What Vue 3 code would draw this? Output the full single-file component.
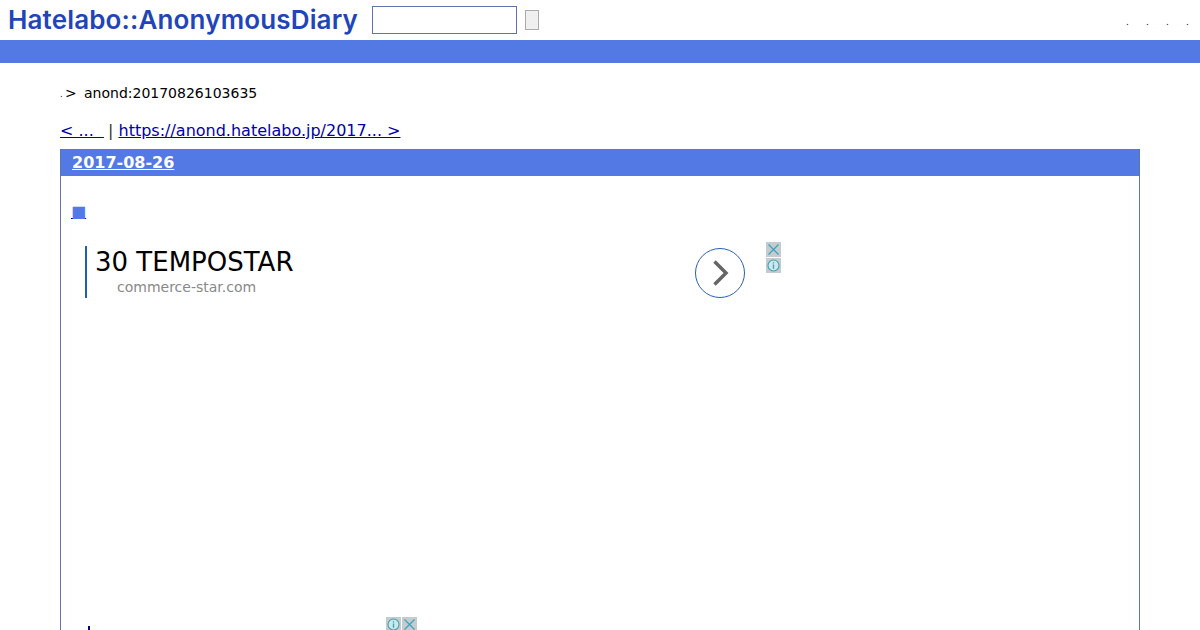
<script setup>
const dots = [1, 2, 3, 4]
</script>

<template>
  <div class="page">
    <header class="top">
      <a class="logo">Hatelabo::AnonymousDiary</a>
      <input class="search" type="text" />
      <button class="go" type="button"></button>
      <ul class="menu">
        <li v-for="d in dots" :key="d">.</li>
      </ul>
    </header>
    <div class="bar"></div>
    <main class="content">
      <p class="crumb"><span class="dot">.</span><span class="gt">&gt;</span><span class="id">anond:20170826103635</span></p>
      <p class="pager"><a class="prev">&lt; ... &nbsp;</a> | <a>https://anond.hatelabo.jp/2017... &gt;</a></p>
      <section class="day">
        <h2 class="date"><a>2017-08-26</a></h2>
        <div class="body">
          <a class="mark">■</a>
          <div class="ad">
            <div class="ad-text">
              <div class="ad-title">30 TEMPOSTAR</div>
              <div class="ad-url">commerce-star.com</div>
            </div>
            <div class="ad-go">
              <svg width="50" height="50" viewBox="0 0 50 50">
                <circle cx="25" cy="25" r="24.5" fill="#fff" stroke="#2a60b0" stroke-width="1" />
                <path d="M19.5 13.5 L31 25 L19.5 36.5" fill="none" stroke="#666" stroke-width="3.5" />
              </svg>
            </div>
            <div class="ad-tools">
              <svg class="tool" width="15" height="15" viewBox="0 0 15 15">
                <rect width="15" height="15" fill="#c4ccd0" />
                <path d="M2.5 2.5 L12.5 12.5 M12.5 2.5 L2.5 12.5" stroke="#3aa3c0" stroke-width="1.2" fill="none" />
              </svg>
              <svg class="tool" width="15" height="15" viewBox="0 0 15 15">
                <rect width="15" height="15" fill="#c4ccd0" />
                <circle cx="7.5" cy="7.5" r="5.5" fill="#cfe6ea" stroke="#3aa3b0" stroke-width="1.1" />
                <path d="M7.5 4.2 V5.6 M7.5 6.6 V10.8" stroke="#3aa3b0" stroke-width="1.3" fill="none" />
              </svg>
            </div>
          </div>
          <div class="second">
            <span class="tick"></span>
            <div class="tools2">
              <svg class="tool" width="15" height="15" viewBox="0 0 15 15">
                <rect width="15" height="15" fill="#c4ccd0" />
                <circle cx="7.5" cy="7.5" r="5.5" fill="#cfe6ea" stroke="#3aa3b0" stroke-width="1.1" />
                <path d="M7.5 4.2 V5.6 M7.5 6.6 V10.8" stroke="#3aa3b0" stroke-width="1.3" fill="none" />
              </svg>
              <svg class="tool" width="15" height="15" viewBox="0 0 15 15">
                <rect width="15" height="15" fill="#c4ccd0" />
                <path d="M2.5 2.5 L12.5 12.5 M12.5 2.5 L2.5 12.5" stroke="#3aa3c0" stroke-width="1.2" fill="none" />
              </svg>
            </div>
          </div>
        </div>
      </section>
    </main>
  </div>
</template>

<style>
html, body { margin: 0; height: 630px; overflow: hidden; background: #fff; }
</style>

<style scoped>
.page { font-family: "DejaVu Sans", sans-serif; color: #000; height: 630px; overflow: hidden; }
.top { height: 40px; display: flex; align-items: flex-start; }
.logo {
  margin: 5px 0 0 8px;
  width: 352px;
  font-family: Inter, sans-serif;
  font-weight: 600;
  font-size: 26px;
  line-height: 30px;
  letter-spacing: 0.15px;
  color: #1f45b8;
  white-space: nowrap;
}
.search {
  box-sizing: border-box;
  width: 145px; height: 28px;
  margin: 6px 0 0 12px;
  padding: 0;
  border: 1px solid #5f75a8;
  background: #fff;
}
.go {
  box-sizing: border-box;
  width: 14px; height: 20px;
  margin: 10px 0 0 8px;
  padding: 0;
  border: 1px solid #aaa;
  background: #efefef;
}
.menu {
  list-style: none; margin: 15px 11px 0 auto; padding: 0;
  display: flex; gap: 17px;
  font-size: 9px; line-height: 14px;
}
.menu li { width: 3px; }
.bar { height: 23px; background: #5279e4; }
.content { padding: 0 60px; }
.crumb {
  margin: 21px 0 0; height: 18px;
  font-size: 14px; line-height: 18px;
  display: flex;
}
.dot { font-size: 8px; width: 5px; line-height: 21px; }
.gt { width: 19px; }
.id { white-space: nowrap; }
.pager {
  margin: 19px 0 0; height: 20px;
  font-size: 16px; line-height: 20px; color: #333;
  white-space: nowrap;
}
.pager a { color: #0000a8; text-decoration: underline; }
.pager .prev { margin-right: -1px; }
.day {
  box-sizing: border-box;
  margin-top: 8px; height: 600px;
  border: 1px solid #5f75a8;
  border-top: 0;
}
.date {
  margin: 0; height: 27px; padding-left: 11px;
  background: #5279e4;
  font-size: 16px; line-height: 27px; font-weight: 700; color: #fff;
}
.date a { color: #fff; text-decoration: underline; }
.body { padding: 26px 0 0 10px; }
.mark {
  display: block; width: 16px;
  font-size: 16px; line-height: 20px;
  color: #5279e4; text-decoration: underline; text-decoration-color: #0000a8;
}
.ad {
  margin: 24px 0 0 14px; height: 380px; width: 696px;
  display: flex; align-items: flex-start;
}
.ad-text {
  box-sizing: border-box;
  width: 610px; height: 52px;
  border-left: 2px solid #1f5fae;
  padding-left: 8px;
}
.ad-title { font-size: 26px; line-height: 32px; color: #000; white-space: nowrap; }
.ad-url { font-size: 14px; line-height: 18px; margin: 0 0 0 22px; color: #888; }
.ad-go { margin-top: 2px; height: 50px; }
.ad-tools { margin: -4px 0 0 21px; display: flex; flex-direction: column; gap: 1px; }
.tool { display: block; }
.second { position: relative; height: 40px; }
.tick { display: block; width: 2px; height: 4px; background: #000080; margin: 0 0 0 17px; position: absolute; top: 0; left: 0; }
.tools2 { position: absolute; left: 315px; top: -9px; display: flex; gap: 1px; }
</style>
